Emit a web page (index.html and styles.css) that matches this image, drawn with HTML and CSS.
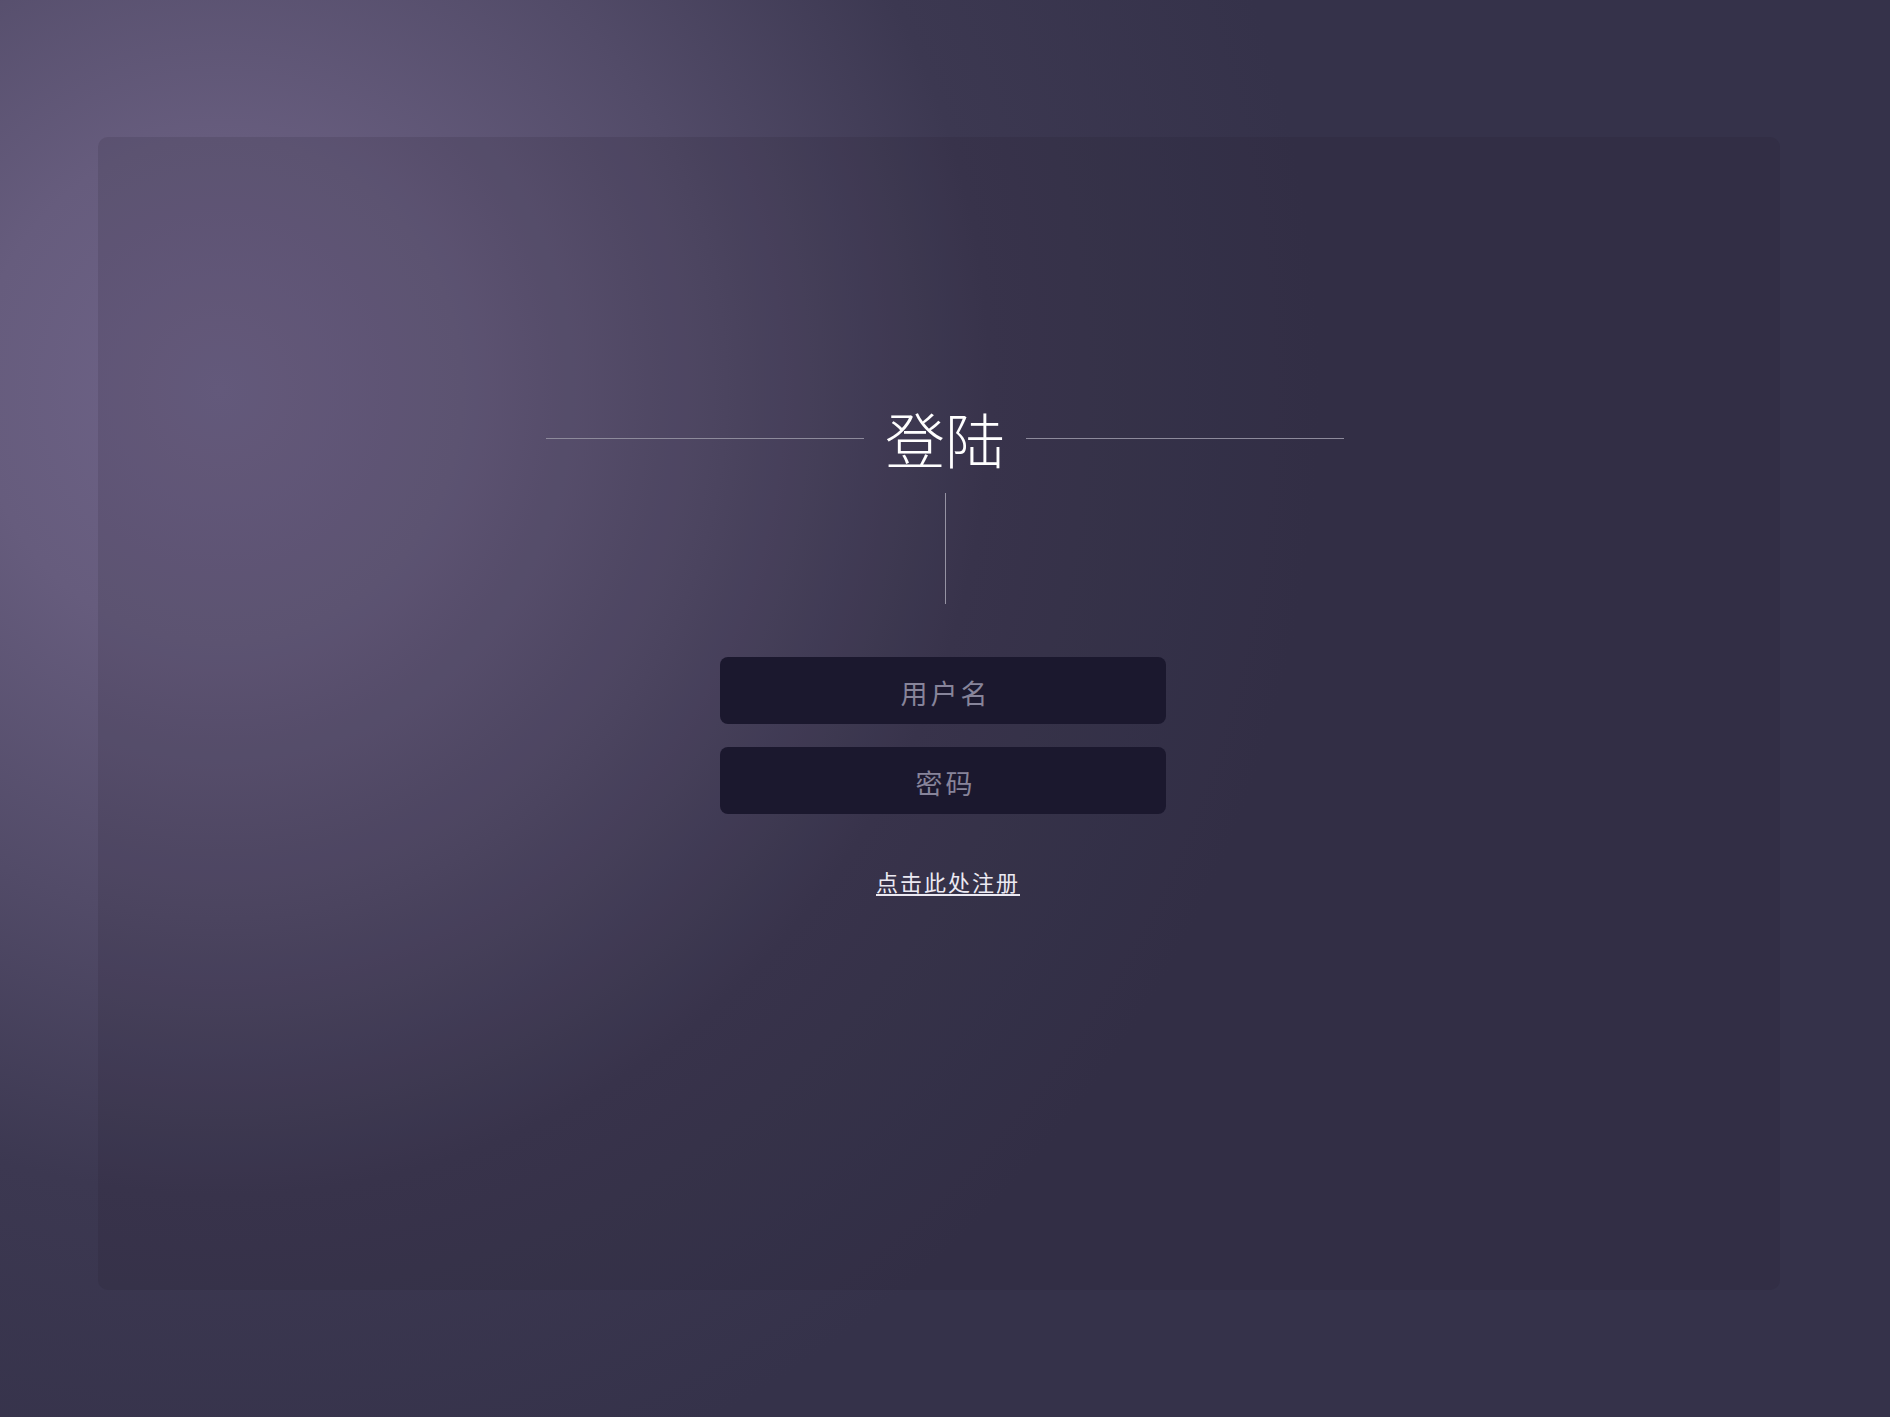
FILE: index.html
```html
<!DOCTYPE html>
<html lang="zh-CN">
<head>
<meta charset="utf-8">
<title>登陆</title>
<link rel="stylesheet" href="styles.css">
</head>
<body>
<div class="page">
  <main class="card">
    <div class="title-row">
      <span class="rule"></span>
      <h1 class="title">登陆</h1>
      <span class="rule"></span>
    </div>
    <span class="stem"></span>
    <form class="form">
      <input class="field" type="text" placeholder="用户名">
      <input class="field" type="password" placeholder="密码">
    </form>
    <a class="register" href="#">点击此处注册</a>
  </main>
</div>
</body>
</html>
```

FILE: styles.css
```css
html, body {
  margin: 0;
  padding: 0;
}

body {
  width: 1890px;
  height: 1417px;
  overflow: hidden;
  font-family: "Noto Sans CJK SC", "Noto Sans", sans-serif;
  background-color: #35324a;
  background-image: radial-gradient(ellipse 1100px 1150px at 220px 390px, #6e6388 0%, #665c7d 22%, #524b68 46%, #3c3851 70%, #35324a 100%);
}

.page {
  padding: 137px 110px 0 98px;
}

.card {
  height: 1153px;
  box-sizing: border-box;
  border-radius: 10px;
  background: rgba(28, 26, 40, 0.13);
  display: flex;
  flex-direction: column;
  align-items: center;
  padding-top: 268px;
  padding-left: 12px;
}

.title-row {
  display: flex;
  align-items: center;
  gap: 21px;
}

.rule {
  display: block;
  width: 318px;
  height: 1px;
  background: #8d8a9b;
}

.title {
  margin: 0;
  font-size: 60px;
  font-weight: 300;
  line-height: 66px;
  color: #ffffff;
}

.stem {
  display: block;
  width: 1px;
  height: 111px;
  margin-top: 22px;
  margin-left: 1px;
  background: #9693a3;
}

.form {
  display: flex;
  flex-direction: column;
  gap: 23px;
  margin-top: 53px;
  margin-right: 5px;
}

.field {
  width: 446px;
  height: 67px;
  box-sizing: border-box;
  border: none;
  border-radius: 8px;
  background: #1b182e;
  color: #d8d6e0;
  font-family: "Noto Sans CJK SC", "Noto Sans", sans-serif;
  font-size: 27px;
  letter-spacing: 3px;
  text-align: center;
  padding: 4px 0 0 6px;
  outline: none;
}

.field::placeholder {
  color: #87849a;
}

.register {
  margin-top: 52px;
  margin-left: 6px;
  font-size: 22px;
  line-height: 30px;
  letter-spacing: 2px;
  color: #ebe9f2;
  text-decoration: underline;
  text-underline-offset: 3px;
}
```
